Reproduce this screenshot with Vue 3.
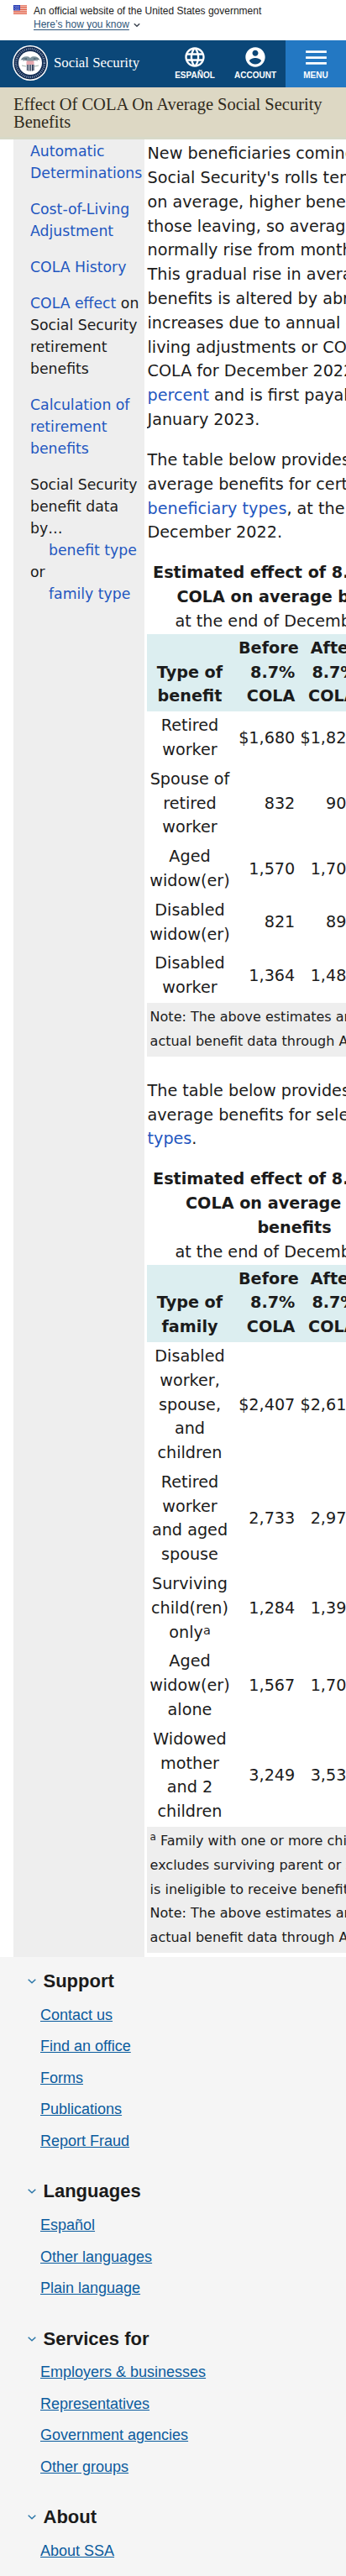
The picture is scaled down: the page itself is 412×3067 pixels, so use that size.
<script setup>
const intro = [
  'New beneficiaries coming onto',
  "Social Security's rolls tend to have,",
  'on average, higher benefits than',
  'those leaving, so average benefits',
  'normally rise from month to month.',
  'This gradual rise in average',
  'benefits is altered by abrupt',
  'increases due to annual cost-of-',
  'living adjustments or COLAs. The',
  'COLA for December 2022 is 8.7',
]

const tables = [
  {
    kind: 'benefit',
    title: ['Estimated effect of 8.7 percent', 'COLA on average benefits'],
    rows: [
      { label: ['Retired', 'worker'], before: '$1,680', after: '$1,827', inc: '$146' },
      { label: ['Spouse of', 'retired', 'worker'], before: '832', after: '905', inc: '72' },
      { label: ['Aged', 'widow(er)'], before: '1,570', after: '1,707', inc: '137' },
      { label: ['Disabled', 'widow(er)'], before: '821', after: '892', inc: '71' },
      { label: ['Disabled', 'worker'], before: '1,364', after: '1,483', inc: '119' },
    ],
    notes: ['Note: The above estimates are based on', 'actual benefit data through August 2022.'],
  },
  {
    kind: 'family',
    title: ['Estimated effect of 8.7 percent', 'COLA on average family', 'benefits'],
    rows: [
      { label: ['Disabled', 'worker,', 'spouse,', 'and', 'children'], before: '$2,407', after: '$2,616', inc: '$209' },
      { label: ['Retired', 'worker', 'and aged', 'spouse'], before: '2,733', after: '2,972', inc: '238' },
      { label: ['Surviving', 'child(ren)', 'only'], sup: 'a', before: '1,284', after: '1,396', inc: '112' },
      { label: ['Aged', 'widow(er)', 'alone'], before: '1,567', after: '1,704', inc: '137' },
      { label: ['Widowed', 'mother', 'and 2', 'children'], before: '3,249', after: '3,532', inc: '283' },
    ],
    sup: 'a',
    notes: [
      'Family with one or more children;',
      'excludes surviving parent or such parent',
      'is ineligible to receive benefits.',
      'Note: The above estimates are based on',
      'actual benefit data through August 2022.',
    ],
  },
]

const groups = [
  { title: 'Support', links: ['Contact us', 'Find an office', 'Forms', 'Publications', 'Report Fraud'] },
  { title: 'Languages', links: ['Español', 'Other languages', 'Plain language'] },
  { title: 'Services for', links: ['Employers & businesses', 'Representatives', 'Government agencies', 'Other groups'] },
  { title: 'About', links: ['About SSA'] },
]
</script>

<template>
  <div class="page">
    <div class="banner">
      <svg class="flag" viewBox="0 0 16 11" width="16" height="11">
        <rect width="16" height="11" fill="#fff" />
        <path d="M0 .8h16M0 2.4h16M0 4h16M0 5.6h16M0 7.2h16M0 8.8h16M0 10.4h16" stroke="#db3e1f" stroke-width=".9" />
        <rect width="8" height="6.4" fill="#1e33b1" />
        <path d="M1 1.3h6.500M1.8 2.700h5.500M1 4.100h6.500M1.800 5.400h5.500" stroke="#fff" stroke-width=".7" stroke-dasharray=".8 .9" />
      </svg>
      <div>
        <p>An official website of the United States government</p>
        <p class="know">
          <a>Here’s how you know</a>
          <svg viewBox="0 0 8 6" width="8" height="6"><path d="M.8 1.200 4 4.300 7.200 1.200" fill="none" stroke="#3d4551" stroke-width="1.500" /></svg>
        </p>
      </div>
    </div>

    <header class="bar">
      <div class="brand">
        <svg viewBox="0 0 42 42" width="42" height="42">
          <circle cx="21" cy="21" r="21" fill="#fff" />
          <circle cx="21" cy="21" r="19.500" fill="#10294f" />
          <circle cx="21" cy="21" r="16.800" fill="none" stroke="#8397b3" stroke-width="2.600" stroke-dasharray="1 1.300" />
          <circle cx="21" cy="21" r="14" fill="#fff" />
          <path d="M9.500 18c1-4 5-5.500 9.500-4.500l2 1.500 2-1.500c4.500-1 8.500.5 9.500 4.500-2-1.800-4-2-6-.8l-3 2.300h-5l-3-2.300c-2-1.200-4-1-6 .8z" fill="#7d929c" />
          <path d="M11 16.500l6-1M12 18l5-.8M31 16.500l-6-1M30 18l-5-.8" stroke="#334b5b" stroke-width=".7" />
          <path d="M16.500 18.500h9v4.500h-9z" fill="#e5a7ad" />
          <path d="M17.500 23v7M19.500 23v7.500M21.500 23v7.500M23.500 23v7.500M25 23v7" stroke="#283854" stroke-width="1.200" />
          <path d="M11 24l5 1M31 24l-5 1" stroke="#9eb0a8" stroke-width="1" />
        </svg>
        <span>Social Security</span>
      </div>
      <a class="nav">
        <span class="ico"><svg viewBox="0 0 24 24" width="28" height="28" fill="#fff"><path d="M11.990 2C6.470 2 2 6.480 2 12s4.470 10 9.990 10C17.520 22 22 17.520 22 12S17.520 2 11.990 2zm6.930 6h-2.950c-.32-1.250-.78-2.450-1.380-3.560 1.840.63 3.370 1.910 4.330 3.560zM12 4.040c.83 1.200 1.480 2.530 1.910 3.960h-3.820c.43-1.430 1.080-2.760 1.910-3.960zM4.260 14C4.100 13.360 4 12.690 4 12s.1-1.360.26-2h3.380c-.08.66-.14 1.320-.14 2 0 .68.06 1.340.14 2H4.260zm.82 2h2.950c.32 1.250.78 2.450 1.380 3.560-1.840-.63-3.370-1.900-4.330-3.560zm2.950-8H5.080c.96-1.660 2.490-2.930 4.330-3.560C8.810 5.550 8.350 6.750 8.030 8zM12 19.960c-.83-1.200-1.480-2.530-1.910-3.960h3.820c-.43 1.430-1.080 2.760-1.910 3.960zM14.340 14H9.660c-.09-.66-.16-1.320-.16-2 0-.68.07-1.350.16-2h4.680c.09.65.16 1.320.16 2 0 .68-.07 1.340-.16 2zm.25 5.560c.6-1.110 1.060-2.310 1.380-3.560h2.950c-.96 1.650-2.490 2.930-4.330 3.560zM16.360 14c.08-.66.14-1.320.14-2 0-.68-.06-1.340-.14-2h3.380c.16.64.26 1.310.26 2s-.1 1.360-.26 2h-3.380z" /></svg></span>
        <span>ESPAÑOL</span>
      </a>
      <a class="nav">
        <span class="ico"><svg viewBox="0 0 24 24" width="28" height="28" fill="#fff"><path d="M12 2C6.480 2 2 6.480 2 12s4.480 10 10 10 10-4.480 10-10S17.520 2 12 2zm0 3c1.660 0 3 1.340 3 3s-1.340 3-3 3-3-1.340-3-3 1.340-3 3-3zm0 14.200c-2.500 0-4.710-1.280-6-3.220.03-1.990 4-3.080 6-3.080 1.990 0 5.970 1.090 6 3.080-1.290 1.940-3.500 3.220-6 3.220z" /></svg></span>
        <span>ACCOUNT</span>
      </a>
      <a class="nav menu">
        <span class="ico"><svg viewBox="0 0 24 24" width="33" height="33" fill="#fff"><path d="M3 18h18v-2H3v2zm0-5h18v-2H3v2zm0-7v2h18V6H3z" /></svg></span>
        <span>MENU</span>
      </a>
    </header>

    <div class="title">
      <h1>Effect Of COLA On Average Social Security Benefits</h1>
    </div>

    <div class="body">
      <nav class="side">
        <p><a>Automatic<br />Determinations</a></p>
        <p><a>Cost-of-Living<br />Adjustment</a></p>
        <p><a>COLA History</a></p>
        <p><a>COLA effect</a> on<br />Social Security<br />retirement<br />benefits</p>
        <p><a>Calculation of<br />retirement<br />benefits</a></p>
        <p>Social Security<br />benefit data<br />by…<br /><a class="in">benefit type</a><br />or<br /><a class="in">family type</a></p>
      </nav>

      <main class="main">
        <p>
          <template v-for="l in intro" :key="l">{{ l }}<br /></template>
          <a>percent</a> and is first payable in<br />January 2023.
        </p>
        <template v-for="t in tables" :key="t.kind">
          <p v-if="t.kind === 'benefit'">
            The table below provides estimated<br />average benefits for certain<br /><a>beneficiary types</a>, at the end of<br />December 2022.
          </p>
          <p v-else class="second">
            The table below provides estimated<br />average benefits for selected <a>family</a><br /><a>types</a>.
          </p>
          <table>
            <caption>
              <b v-for="l in t.title" :key="l">{{ l }}</b>
              at the end of December 2022
            </caption>
            <colgroup><col class="c1" /><col class="c2" /><col class="c2" /><col /></colgroup>
            <thead>
              <tr>
                <th class="lab">Type of<br />{{ t.kind }}</th>
                <th>Before<br />8.7%<br />COLA</th>
                <th>After<br />8.7%<br />COLA</th>
                <th>Increase</th>
              </tr>
            </thead>
            <tbody>
              <tr v-for="(r, i) in t.rows" :key="i">
                <td class="lab">
                  <template v-for="(l, j) in r.label" :key="j"><br v-if="j" />{{ l }}</template><sup v-if="r.sup" class="near">{{ r.sup }}</sup>
                </td>
                <td>{{ r.before }}</td>
                <td>{{ r.after }}</td>
                <td>{{ r.inc }}</td>
              </tr>
              <tr>
                <td class="note" colspan="4">
                  <template v-if="t.sup"><sup>{{ t.sup }}</sup>{{ ' ' }}</template><template v-for="(l, j) in t.notes" :key="j"><br v-if="j" />{{ l }}</template>
                </td>
              </tr>
            </tbody>
          </table>
        </template>
      </main>
    </div>

    <footer class="foot">
      <section v-for="g in groups" :key="g.title">
        <h2>
          <svg viewBox="0 0 10 6" width="10" height="6"><path d="M.7.8 5 4.800 9.300.8" fill="none" stroke="#2c77a8" stroke-width="1.500" /></svg>
          {{ g.title }}
        </h2>
        <ul>
          <li v-for="l in g.links" :key="l"><a>{{ l }}</a></li>
        </ul>
      </section>
    </footer>
  </div>
</template>

<style>
body {
  margin: 0;
  background: #fff;
}
</style>

<style scoped>
.page {
  width: 412px;
  height: 3067px;
  overflow: hidden;
  display: flex;
  flex-direction: column;
  font-family: "Liberation Sans", sans-serif;
  color: #1b1b1b;
}
p, h1, h2, ul {
  margin: 0;
  padding: 0;
}
.banner {
  height: 48px;
  box-sizing: border-box;
  flex: none;
  display: flex;
  gap: 8px;
  padding: 5px 16px 0;
  font-size: 12px;
  line-height: 16px;
}
.flag {
  margin-top: 1px;
}
.know {
  display: flex;
  align-items: center;
  gap: 5px;
  color: #2e5579;
}
.know a {
  text-decoration: underline;
  text-underline-offset: 2px;
}
.know svg {
  margin-top: 2px;
}
.bar {
  height: 56px;
  flex: none;
  display: flex;
  background: #0b4778;
  color: #fff;
}
.brand {
  flex: 1;
  display: flex;
  align-items: center;
  gap: 7px;
  padding: 0 0 2px 15px;
  font: 16.8px/20px "Liberation Serif", serif;
  white-space: nowrap;
}
.nav {
  width: 72px;
  display: flex;
  flex-direction: column;
  align-items: center;
  padding-top: 4px;
  box-sizing: border-box;
  font-size: 10px;
  font-weight: bold;
  line-height: 12px;
}
.ico {
  height: 32px;
  display: flex;
  align-items: center;
}
.menu {
  background: #2378c3;
}
.title {
  height: 61.500px;
  box-sizing: border-box;
  flex: none;
  padding: 9px 16px 0;
  background: #ddd8c4;
  border-top: 1px solid #dfd3c1;
  border-bottom: 3px solid #d7d9c8;
}
h1 {
  font: 20.480px/21px "Liberation Serif", serif;
  color: #302a1c;
}
.body {
  height: 2164.500px;
  flex: none;
  display: flex;
  gap: 3px;
  padding-left: 16px;
  font-family: "DejaVu Sans", sans-serif;
  white-space: nowrap;
}
.body a {
  color: #1f57c0;
}
.side {
  width: 156px;
  flex: none;
  box-sizing: border-box;
  padding: 2.500px 0 0 20px;
  background: #eee;
  font-size: 17.280px;
  line-height: 25.920px;
}
.side p {
  margin-bottom: 17.280px;
}
.side .in {
  margin-left: 22px;
}
.main {
  flex: 1;
  min-width: 0;
  overflow: hidden;
  padding-top: 3.800px;
  font-size: 19.200px;
  line-height: 28.800px;
}
.main p {
  margin-bottom: 19.200px;
  padding-left: 0.500px;
}
.main .second {
  margin-top: 27.200px;
}
table {
  width: 351px;
  table-layout: fixed;
  border-collapse: separate;
  border-spacing: 0;
}
caption b {
  display: block;
}
.c1 {
  width: 106px;
}
.c2 {
  width: 73.300px;
}
th, td {
  padding: 3px;
  text-align: right;
  vertical-align: middle;
}
th {
  background: #dceef0;
  vertical-align: bottom;
}
.lab {
  text-align: center;
  padding: 3px 4px 3px 0;
}
td.note {
  padding-left: 3.600px;
  background: #eee;
  font-size: 16px;
  text-align: left;
}
sup {
  font-size: 75%;
  line-height: 0;
}
.near {
  vertical-align: 4px;
  font-size: 14.400px;
}
.foot {
  flex: 1;
  padding: 16px 33px 0;
  background: #f5f5f5;
  display: flex;
  flex-direction: column;
  gap: 27.800px;
}
h2 {
  display: flex;
  align-items: center;
  gap: 8.500px;
  font-size: 22px;
  line-height: 26px;
  margin-bottom: 8.600px;
}
ul {
  list-style: none;
  padding-left: 15px;
}
li {
  font-size: 18px;
  line-height: 37.600px;
}
li a {
  color: #0b5c9e;
  text-decoration: underline;
}
</style>
